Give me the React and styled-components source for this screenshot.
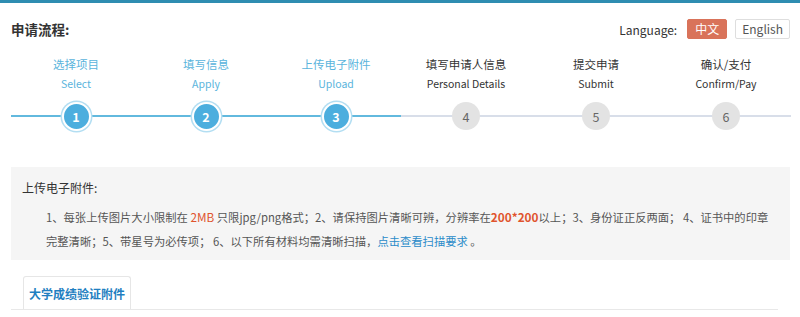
import React from "react";
import styled, { createGlobalStyle } from "styled-components";

const Global = createGlobalStyle`
  html, body { margin: 0; padding: 0; background: #fff; }
  body {
    font-family: "Noto Sans CJK SC", "Noto Sans", sans-serif;
    color: #333;
  }
`;

const Page = styled.div`
  border-top: 3px solid #2f8db1;
  padding: 0 10px 0 11px;
  width: 800px;
  box-sizing: border-box;
`;

const Header = styled.div`
  height: 52px;
  display: flex;
  align-items: center;
  justify-content: space-between;
`;

const Title = styled.h2`
  margin: 0;
  font-size: 13.5px;
  font-weight: 700;
  color: #333;
  line-height: 18px;
`;

const Lang = styled.div`
  display: flex;
  align-items: center;
  gap: 8px;
  font-size: 12px;
  color: #333;
`;

const LangLabel = styled.span`
  margin-right: 2px;
`;

const LangButton = styled.button`
  font-family: inherit;
  font-size: 12px;
  height: 20px;
  line-height: 18px;
  padding: 0 ${(p) => (p.$active ? "7px" : "6px")};
  border-radius: 2px;
  cursor: pointer;
  border: 1px solid ${(p) => (p.$active ? "#d9735a" : "#dedede")};
  background: ${(p) => (p.$active ? "#d9735a" : "#fff")};
  color: ${(p) => (p.$active ? "#fff" : "#555")};
`;

const Steps = styled.div`
  display: grid;
  grid-template-columns: repeat(6, 130px);
`;

const Step = styled.div`
  display: flex;
  flex-direction: column;
  align-items: center;
  color: ${(p) => (p.$active ? "#5ab4dc" : "#333")};
`;

const StepCn = styled.div`
  font-size: 11.5px;
  line-height: 18px;
`;

const StepEn = styled.div`
  font-size: 10.5px;
  line-height: 18px;
  margin-top: 2px;
`;

const Track = styled.div`
  align-self: stretch;
  height: 28px;
  margin-top: 9px;
  display: flex;
  align-items: center;
  justify-content: center;
  position: relative;
  &::before {
    content: "";
    position: absolute;
    left: 0;
    right: 0;
    top: 13px;
    height: 2px;
    background: ${(p) => (p.$active ? "#62b9de" : "#d8dee9")};
  }
`;

const Circle = styled.div`
  position: relative;
  z-index: 1;
  box-sizing: border-box;
  width: ${(p) => (p.$active ? "29px" : "28px")};
  height: ${(p) => (p.$active ? "29px" : "28px")};
  border-radius: 50%;
  display: flex;
  align-items: center;
  justify-content: center;
  font-size: 12.5px;
  font-weight: ${(p) => (p.$active ? 700 : 400)};
  background: ${(p) => (p.$active ? "#4caede" : "#e3e3e3")};
  color: ${(p) => (p.$active ? "#fff" : "#666")};
  border: ${(p) => (p.$active ? "2px solid #fff" : "none")};
  box-shadow: ${(p) => (p.$active ? "0 0 0 1.5px #b3def2" : "none")};
`;

const Notice = styled.div`
  margin-top: 37px;
  background: #f5f5f5;
  padding: 12px 12px 7px 11px;
`;

const NoticeTitle = styled.div`
  font-size: 12px;
  line-height: 18px;
  color: #333;
`;

const NoticeText = styled.p`
  margin: 8px 0 0;
  padding-left: 24px;
  font-size: 11.3px;
  line-height: 24px;
  color: #555;
`;

const Line = styled.span`
  display: block;
  white-space: nowrap;
`;

const Red = styled.span`
  color: #e0542e;
  font-size: 11.8px;
  font-weight: ${(p) => (p.$bold ? 700 : 400)};
`;

const Link = styled.a`
  color: #2a8bc9;
  text-decoration: none;
`;

const Tabs = styled.div`
  margin: 16px 12px 0 0;
  padding-left: 12px;
  border-bottom: 1px solid #e8e8e8;
  display: flex;
`;

const Tab = styled.div`
  width: 108px;
  height: 33px;
  box-sizing: border-box;
  border: 1px solid #e6e6e6;
  border-bottom: none;
  border-radius: 3px 3px 0 0;
  display: flex;
  align-items: center;
  justify-content: center;
  font-size: 12px;
  font-weight: 700;
  color: #1f7fc1;
  background: #fff;
`;

const steps = [
  { cn: "选择项目", en: "Select", active: true },
  { cn: "填写信息", en: "Apply", active: true },
  { cn: "上传电子附件", en: "Upload", active: true },
  { cn: "填写申请人信息", en: "Personal Details", active: false },
  { cn: "提交申请", en: "Submit", active: false },
  { cn: "确认/支付", en: "Confirm/Pay", active: false },
];

export default function App() {
  return (
    <>
      <Global />
      <Page>
        <Header>
          <Title>申请流程:</Title>
          <Lang>
            <LangLabel>Language:</LangLabel>
            <LangButton $active>中文</LangButton>
            <LangButton>English</LangButton>
          </Lang>
        </Header>
        <Steps>
          {steps.map((s, i) => (
            <Step key={i} $active={s.active}>
              <StepCn>{s.cn}</StepCn>
              <StepEn>{s.en}</StepEn>
              <Track $active={s.active}>
                <Circle $active={s.active}>{i + 1}</Circle>
              </Track>
            </Step>
          ))}
        </Steps>
        <Notice>
          <NoticeTitle>上传电子附件:</NoticeTitle>
          <NoticeText>
            <Line>
              1、每张上传图片大小限制在 <Red>2MB</Red> 只限jpg/png格式；2、请保持图片清晰可辨，分辨率在
              <Red $bold>200*200</Red>以上；3、身份证正反两面； 4、证书中的印章
            </Line>
            <Line>
              完整清晰；5、带星号为必传项； 6、以下所有材料均需清晰扫描，<Link href="#">点击查看扫描要求</Link> 。
            </Line>
          </NoticeText>
        </Notice>
        <Tabs>
          <Tab>大学成绩验证附件</Tab>
        </Tabs>
      </Page>
    </>
  );
}
